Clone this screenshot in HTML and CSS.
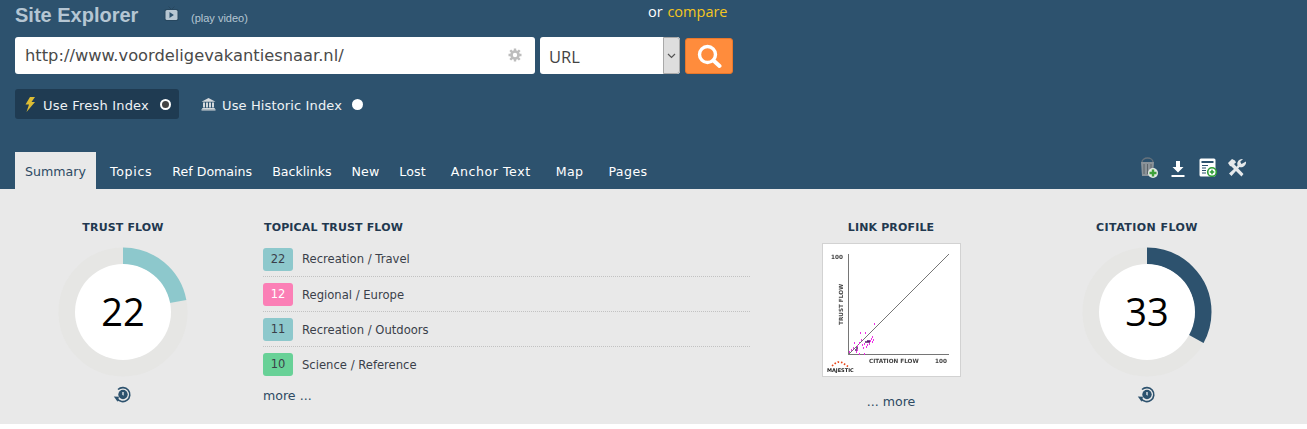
FILE: index.html
```html
<!DOCTYPE html>
<html lang="en">
<head>
<meta charset="utf-8">
<title>Site Explorer</title>
<link rel="stylesheet" href="styles.css">
</head>
<body>
<header class="header">
  <div class="title-row">
    <h1 class="title">Site Explorer</h1>
    <svg class="video-icon" width="15" height="16" viewBox="0 0 15 16"><path d="M4.500 0.500l3 3 3-3" fill="none" stroke="#27475f" stroke-width="1"/><rect x="0.500" y="3" width="14" height="12" rx="2" fill="#27475f"/><rect x="1.500" y="4" width="12" height="10" rx="1.500" fill="#b7c7d3"/><path d="M5.500 6l4.400 3-4.400 3z" fill="#2d526e"/></svg>
    <span class="play">(play video)</span>
    <span class="compare">or <a class="compare-link">compare</a></span>
  </div>
  <div class="search-row">
    <div class="url-box">
      <span>http://www.voordeligevakantiesnaar.nl/</span>
      <svg class="gear" width="14" height="14" viewBox="0 0 14 14"><path d="M7 2.200a4.800 4.800 0 1 0 0 9.600a4.800 4.800 0 0 0 0-9.600zm0 2.600a2.200 2.200 0 1 1 0 4.400a2.200 2.200 0 0 1 0-4.400z" fill="#bdbdbd"/><path d="M5.800.5h2.400v2.400H5.800zM5.800 11.100h2.400v2.400H5.800zM.5 5.800h2.400v2.400H.5zM11.100 5.800h2.400v2.400h-2.400zM1.400 3.100L3.100 1.400l1.700 1.700-1.700 1.700zM9.200 10.900l1.700-1.700 1.700 1.700-1.700 1.700zM10.900 1.400l1.700 1.700-1.700 1.700-1.700-1.700zM3.100 9.200l1.700 1.700-1.700 1.700-1.700-1.700z" fill="#bdbdbd"/></svg>
    </div>
    <div class="type-select">
      <span class="type-value">URL</span>
      <span class="type-arrow"><svg width="9" height="6" viewBox="0 0 9 6"><path d="M1 1l3.500 3.500L8 1" fill="none" stroke="#555" stroke-width="1.200"/></svg></span>
    </div>
    <button class="go" type="button" aria-label="Search"><svg width="26" height="26" viewBox="0 0 26 26"><circle cx="11.500" cy="11.500" r="8" fill="none" stroke="#fff" stroke-width="3.400"/><path d="M17.500 17.500l6 5.500" stroke="#fff" stroke-width="4" stroke-linecap="round"/></svg></button>
  </div>
  <div class="index-row">
    <div class="index index-on">
      <svg width="12" height="15" viewBox="0 0 12 15"><path d="M6 0h5L7.500 5H11L2.500 15 5 7.500H1.500z" fill="#dcbc34"/></svg>
      <span>Use Fresh Index</span>
      <span class="radio radio-on"></span>
    </div>
    <div class="index index-off">
      <svg width="15" height="14" viewBox="0 0 15 14"><path d="M7.500 1L14.500 4.800H.5zM2 5.500h2v5H2zM5 5.500h2v5H5zM8 5.500h2v5H8zM11 5.500h2v5h-2zM1.200 11h12.600v1H1.200zM.5 12.300h14v1.200H.5z" fill="#d5d9dc"/></svg>
      <span>Use Historic Index</span>
      <span class="radio"></span>
    </div>
  </div>
  <nav class="tabs-row">
    <a class="tab tab-active">Summary</a>
    <a class="tab tab-topics">Topics</a>
    <a class="tab">Ref Domains</a>
    <a class="tab">Backlinks</a>
    <a class="tab tab-tight">New</a>
    <a class="tab tab-tight">Lost</a>
    <a class="tab tab-far tab-anchor">Anchor Text</a>
    <a class="tab tab-far tab-wide">Map</a>
    <a class="tab tab-far tab-wide">Pages</a>
    <div class="tools">
      <svg width="20" height="22" viewBox="0 0 20 22"><path d="M3 5a5.500 4 0 0 1 11 0" fill="none" stroke="#66727c" stroke-width="1.300"/><path d="M2 5h13l-1 14H3z" fill="#8b9399"/><path d="M5 7v10M8.500 7v10M12 7v10" stroke="#5d6469" stroke-width="1"/><circle cx="14" cy="16" r="5" fill="#e4ebe4"/><path d="M14 12.500v7M10.500 16h7" stroke="#3ea23a" stroke-width="2.400"/></svg>
      <svg class="tool-download" width="14" height="18" viewBox="0 0 14 18"><path d="M5 1h4v6h3.500L7 12.500 1.500 7H5zM0.500 15h13v2H.5z" fill="#fff"/></svg>
      <svg class="tool-form" width="18" height="19" viewBox="0 0 18 19"><rect x="0.500" y="0.500" width="16" height="18" rx="1.500" fill="#fff"/><path d="M2.500 3h12v2h-12zM3 7h6v1H3zM3 9.500h4v1H3zM3 12h4v1H3zM3 14.500h4v1H3z" fill="#2d526e"/><circle cx="13" cy="14" r="4.300" fill="#fff" stroke="#2f9e35" stroke-width="1.600"/><path d="M13 11.800v4.400M10.800 14h4.400" stroke="#2f9e35" stroke-width="1.500"/></svg>
      <svg class="tool-wrench" width="22" height="20" viewBox="0 0 20 20"><path d="M1 5l4-4 3 1.500 1 2-2 1.500 9.500 10-2 2.500-10-10L3 8z" fill="#e6e9eb"/><path d="M19 3.500a5 5 0 0 1-6.500 5.500L4.500 18 2 15.500l8.500-7.800A5 5 0 0 1 16 1l-2.800 2.800L14.500 6z" fill="#e6e9eb"/></svg>
    </div>
  </nav>
</header>
<main class="content">
  <section class="flow">
    <h2 class="heading">TRUST FLOW</h2>
    <div class="donut">
      <svg width="130" height="130" viewBox="0 0 130 130"><circle cx="65" cy="65" r="56" fill="none" stroke="#e6e6e4" stroke-width="17"/><circle class="arc-trust" cx="65" cy="65" r="56" pathLength="100" stroke-dasharray="22 78" transform="rotate(-90 65 65)"/><circle cx="65" cy="65" r="48" fill="#fff"/></svg>
      <span class="score">22</span>
    </div>
    <svg class="history" width="18" height="18" viewBox="0 0 18 18"><circle cx="10" cy="8.500" r="4.700" fill="#2d526e"/><path d="M10 6v3h-.1" stroke="#fff" stroke-width="1.200" fill="none"/><path d="M5 3.500A7 7 0 1 1 4 12.500" fill="none" stroke="#2d526e" stroke-width="1.600"/><path d="M.8 10.500l5.200.2-1.400 5z" fill="#2d526e"/></svg>
  </section>
  <section class="topics">
    <h2 class="heading">TOPICAL TRUST FLOW</h2>
    <ul class="topic-list">
      <li class="topic"><span class="badge badge-teal">22</span>Recreation / Travel</li>
      <li class="topic"><span class="badge badge-pink">12</span>Regional / Europe</li>
      <li class="topic"><span class="badge badge-teal">11</span>Recreation / Outdoors</li>
      <li class="topic"><span class="badge badge-green">10</span>Science / Reference</li>
    </ul>
    <a class="more">more ...</a>
  </section>
  <section class="profile">
    <h2 class="heading">LINK PROFILE</h2>
    <div class="chart">
      <svg width="137" height="132" viewBox="0 0 137 132">
        <path d="M25.500 10v100.500H126M25.500 110.500L126 10" fill="none" stroke="#666" stroke-width="0.900"/>
        <text class="chart-text" x="8" y="15">100</text>
        <text class="chart-text" x="112" y="119">100</text>
        <text class="chart-text" x="46" y="119">CITATION FLOW</text>
        <text class="chart-text" transform="rotate(-90 20 81)" x="20" y="81">TRUST FLOW</text>
        <text class="chart-logo" x="4" y="128">MAJESTIC</text>
        <path d="M9 122l3-2.500 3-1.500 4 .5 3 2 3 2" fill="none" stroke="#e8481c" stroke-width="1.600" stroke-dasharray="1.600 1.800"/>
        <path class="dots" d="M51 80h1M42 89h1M37 89h1M31 99h1M49 93h1M48 95h1M50 96h1M47 97h1M46 100h1M44 101h1M41 100h1M39 101h1M40 104h1M43 103h1M49 98h1M38 96h1M34 102h1M30 104h1M34 106h1M33 108h1M28 106h1M26 108h1M36 110h1M41 110h1M36 99h1"/>
        <path class="dots-dark" d="M33 104h2M32 106h2M42 98h5M44 97h3"/>
      </svg>
    </div>
    <a class="more">... more</a>
  </section>
  <section class="flow flow-citation">
    <h2 class="heading heading-citation">CITATION FLOW</h2>
    <div class="donut">
      <svg width="130" height="130" viewBox="0 0 130 130"><circle cx="65" cy="65" r="56" fill="none" stroke="#e6e6e4" stroke-width="17"/><circle class="arc-citation" cx="65" cy="65" r="56" pathLength="100" stroke-dasharray="33 67" transform="rotate(-90 65 65)"/><circle cx="65" cy="65" r="48" fill="#fff"/></svg>
      <span class="score">33</span>
    </div>
    <svg class="history" width="18" height="18" viewBox="0 0 18 18"><circle cx="10" cy="8.500" r="4.700" fill="#2d526e"/><path d="M10 6v3h-.1" stroke="#fff" stroke-width="1.200" fill="none"/><path d="M5 3.500A7 7 0 1 1 4 12.500" fill="none" stroke="#2d526e" stroke-width="1.600"/><path d="M.8 10.500l5.200.2-1.400 5z" fill="#2d526e"/></svg>
  </section>
</main>
</body>
</html>
```
FILE: styles.css
```css
* { box-sizing: border-box; }
html, body { margin: 0; background: #fff; }
body { font-family: "DejaVu Sans", Verdana, sans-serif; font-size: 13px; color: #2c3e50; height: 429px; overflow: hidden; }

.header { background: #2d526e; height: 189px; padding: 0 0 0 15px; display: flex; flex-direction: column; color: #fff; }

.title-row { height: 37px; display: flex; align-items: flex-start; }
.title { margin: 3px 0 0; font: bold 20px/24px "Liberation Sans", Arial, sans-serif; color: #b5c6d3; width: 149px; }
.video-icon { margin-top: 6px; }
.play { margin: 12px 0 0 12px; font: 11px/13px "Liberation Sans", Arial, sans-serif; color: #b5c6d3; width: 400px; }
.compare { font: 14.500px/24px "Open Sans", sans-serif; color: #fff; margin-left: 57px; }
.compare-link { color: #f4c61f; margin-left: 1px; }

.search-row { display: flex; height: 37px; align-items: flex-start; }
.url-box { width: 520px; height: 37px; background: #fff; border-radius: 3px; display: flex; align-items: center; justify-content: space-between; padding: 0 13px 0 10px; font-size: 16.300px; color: #4a4a4a; }
.gear { margin-top: -1px; }
.type-select { margin-left: 5px; width: 140px; height: 37px; background: #fff; border-radius: 3px; display: flex; overflow: hidden; }
.type-value { flex: 1; padding-left: 9px; font: 16.500px/40px "Open Sans", sans-serif; color: #444; }
.type-arrow { width: 17px; background: #dedede; border: 1px solid #a9a9a9; border-radius: 0 3px 3px 0; display: flex; align-items: center; justify-content: center; }
.go { margin: 1px 0 0 5px; width: 48px; height: 36px; padding: 0; background: #ff8c3c; border: 1px solid #e8772a; border-radius: 3px; display: flex; align-items: center; justify-content: center; }

.index-row { margin-top: 15px; height: 30px; display: flex; }
.index { height: 30px; display: flex; align-items: center; border-radius: 3px; font-size: 13px; color: #eef2f5; white-space: nowrap; }
.index span:not(.radio) { padding-top: 2px; }
.index-on { background: #1f3b52; width: 164px; padding: 0 0 0 9px; gap: 7px; letter-spacing: 0.2px; }
.index-off { margin-left: 14px; padding: 0 8px; gap: 6px; letter-spacing: 0.13px; }
.radio { width: 11px; height: 11px; border-radius: 50%; background: #fff; margin-left: 4px; flex: none; }
.radio-on { background: #444; border: 2.500px solid #fff; }

.tabs-row { margin-top: 33px; height: 37px; display: flex; align-items: stretch; }
.tab { padding: 0 10px; line-height: 39px; color: #fff; font-size: 12.600px; }
.tab-active { background: #e9e9e9; color: #2d4a63; margin-right: 4px; min-width: 80px; }
.tab-topics { letter-spacing: 0.7px; }
.tab-tight { letter-spacing: 0.1px; }
.tab-wide { letter-spacing: 0.4px; }
.tab-anchor { letter-spacing: 0.55px; }
.tab-far { margin-left: 5px; }
.tools { margin-left: auto; width: 168px; display: flex; align-items: flex-start; padding-top: 5px; }
.tool-download { margin: 3px 0 0 12px; }
.tool-form { margin: 1px 0 0 14px; }
.tool-wrench { margin: 1px 0 0 9px; }

.content { background: #e9e9e9; height: 235px; display: grid; grid-template-columns: 246px 500px 290px 1fr; position: relative; }
.heading { margin: 0; font-size: 11px; line-height: 14px; font-weight: bold; color: #22384f; letter-spacing: 0.15px; padding-top: 1px; }
.heading-citation { letter-spacing: 0.45px; }

.flow { padding-top: 31px; display: flex; flex-direction: column; align-items: center; }
.flow-citation { width: 246px; margin-left: -12px; }
.donut { position: relative; width: 130px; height: 130px; margin-top: 12px; }
.donut svg { display: block; }
.score { position: absolute; inset: 0; padding-bottom: 3px; display: flex; align-items: center; justify-content: center; font: 38px/1 "Open Sans", sans-serif; color: #000; }
.arc-trust, .arc-citation { fill: none; stroke-width: 17; }
.arc-trust { stroke: #8dc8cc; }
.arc-citation { stroke: #2d526e; }
.history { margin: 9px 2px 0 0; }

.topics { padding: 31px 0 0 18px; }
.topics .more, .topic-list { margin-left: -1px; }
.topic-list { list-style: none; margin-top: 6px; margin-bottom: 0; padding: 1px 0 0; width: 487px; }
.topic { height: 35px; display: flex; align-items: center; font-size: 11.600px; color: #3a3f4a; }
.topic:first-child { height: 34px; }
.topic + .topic { border-top: 1px dotted #c2c2c2; padding-top: 2px; }
.topic + .topic .badge { margin-top: -2px; }
.badge { width: 30px; height: 23px; margin-right: 9px; border-radius: 3px; display: flex; align-items: center; justify-content: center; font-size: 11.500px; }
.badge-teal { background: #8dc8cc; }
.badge-pink { background: #fb7fb6; color: #fff; }
.badge-green { background: #68d197; }
.more { display: block; font-size: 12.600px; color: #2d4a63; }
.topics .more { margin-top: 7px; }

.profile { padding-top: 31px; display: flex; flex-direction: column; align-items: center; }
.chart { margin-top: 8px; width: 139px; height: 134px; background: #fff; border: 1px solid #d2d2d2; }
.chart svg { display: block; filter: blur(0.35px); }
.chart-text { font-size: 5.700px; font-weight: bold; fill: #444; }
.chart-logo { font-size: 5px; font-weight: bold; fill: #222; }
.dots { stroke: #ee30e6; stroke-width: 2; fill: none; }
.dots-dark { stroke: #5b1d6e; stroke-width: 1.300; fill: none; }
.profile .more { margin-top: 17px; }
```
